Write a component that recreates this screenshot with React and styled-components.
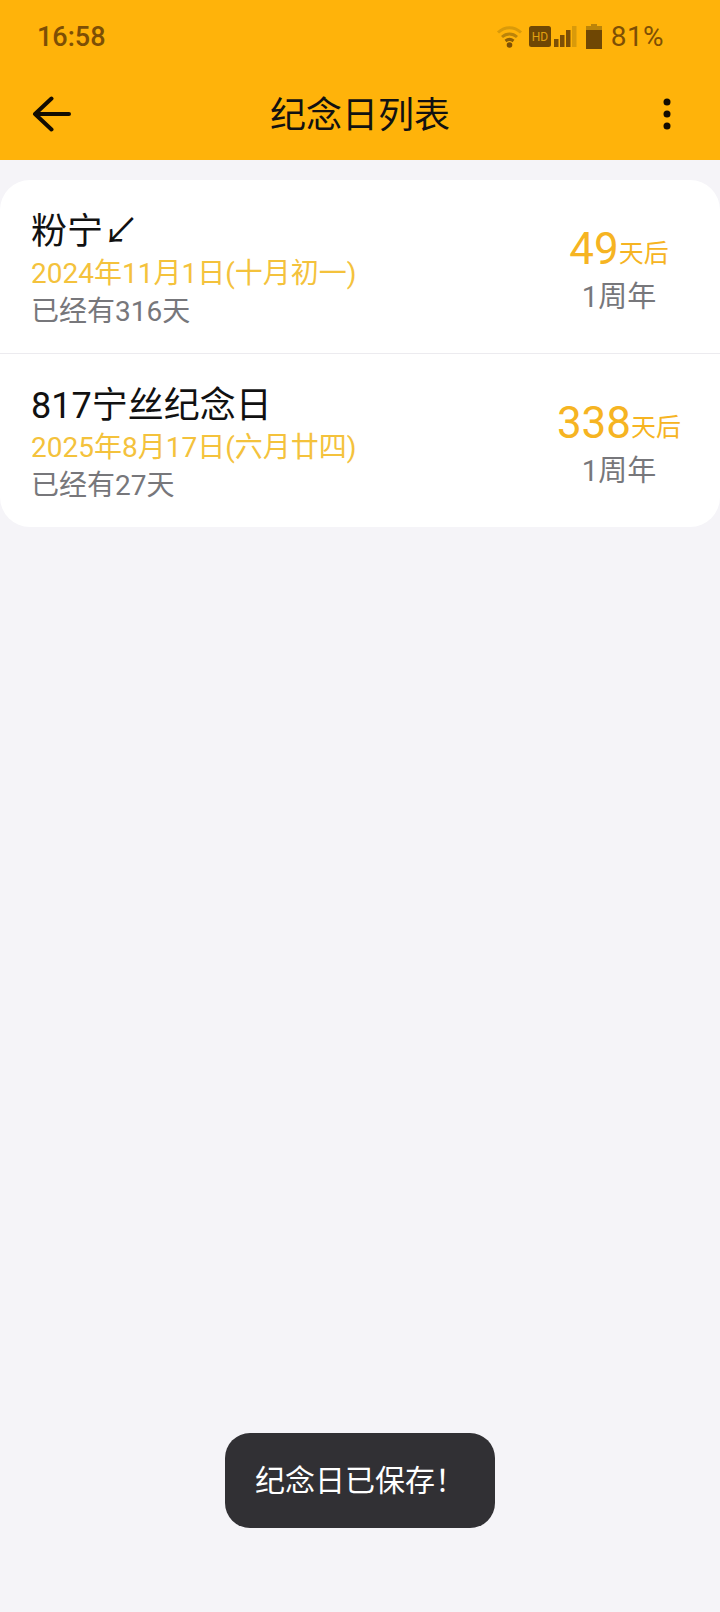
import styled, { createGlobalStyle } from "styled-components";

const GlobalStyle = createGlobalStyle`
  html, body {
    margin: 0;
    padding: 0;
    background: #f5f4f8;
  }
  * {
    box-sizing: border-box;
  }
`;

const AMBER = "#ffb30a";
const STATUS = "#7d4f05";

const anniversaries = [
  {
    name: "粉宁↙",
    date: "2024年11月1日(十月初一)",
    passed: "已经有316天",
    left: "49",
    years: "1周年",
  },
  {
    name: "817宁丝纪念日",
    date: "2025年8月17日(六月廿四)",
    passed: "已经有27天",
    left: "338",
    years: "1周年",
  },
];

const Page = styled.div`
  position: relative;
  width: 720px;
  height: 1612px;
  overflow: hidden;
  background: #f5f4f8;
  font-family: Roboto, "Noto Sans CJK SC", sans-serif;
`;

const Header = styled.header`
  height: 160px;
  background: ${AMBER};
`;

const StatusBar = styled.div`
  display: flex;
  align-items: center;
  justify-content: space-between;
  height: 72px;
  padding: 0 56px 0 37px;
  color: ${STATUS};
  font-size: 28px;
`;

const Clock = styled.span`
  margin-top: 2px;
  font-size: 27px;
  font-weight: 500;
`;

const StatusIcons = styled.div`
  display: flex;
  align-items: center;
`;

const Battery = styled.span`
  margin-left: 9px;
  letter-spacing: 0.4px;
`;

const Toolbar = styled.div`
  display: grid;
  grid-template-columns: 1fr auto 1fr;
  align-items: center;
  height: 88px;
  padding: 0 31px 4px;
`;

const ToolbarEnd = styled.div`
  display: flex;
  justify-content: ${(props) => (props.$right ? "flex-end" : "flex-start")};
  padding-right: ${(props) => (props.$right ? "18px" : "0")};
`;

const Title = styled.h1`
  margin: 4px 0 0;
  font-size: 36px;
  font-weight: 400;
  line-height: 48px;
  color: #111;
`;

const Card = styled.section`
  margin-top: 20px;
  background: #fff;
  border-radius: 30px;
`;

const Row = styled.div`
  display: flex;
  align-items: center;
  justify-content: space-between;
  height: 173px;
  padding: 0 21px 0 31px;
  & + & {
    height: 174px;
    border-top: 1px solid #ecebef;
  }
`;

const Info = styled.div`
  display: flex;
  flex-direction: column;
  padding-top: 3px;
`;

const Name = styled.div`
  padding-top: 2px;
  font-size: 36px;
  line-height: 46px;
  color: #111;
`;

const DateText = styled.div`
  font-size: 28px;
  line-height: 38px;
  color: #f4c23c;
`;

const Passed = styled.div`
  margin-top: 1px;
  font-size: 28px;
  line-height: 36px;
  color: #77777b;
`;

const Countdown = styled.div`
  display: flex;
  flex-direction: column;
  align-items: center;
  width: 160px;
  padding-top: 6px;
`;

const Days = styled.div`
  height: 52px;
  color: #f6b422;
  font-size: 44px;
  line-height: 52px;
  white-space: nowrap;
`;

const DaysUnit = styled.span`
  font-size: 25px;
  vertical-align: 2px;
`;

const Years = styled.div`
  margin-top: 2px;
  font-size: 29px;
  line-height: 40px;
  color: #77777b;
`;

const Toast = styled.div`
  position: absolute;
  left: 225px;
  top: 1433px;
  width: 270px;
  height: 95px;
  padding: 0 0 6px 30px;
  display: flex;
  align-items: center;
  background: #313034;
  border-radius: 25px;
  color: #fff;
  font-size: 30px;
`;

const WifiIcon = () => (
  <svg width="27" height="24" viewBox="0 0 27 24" fill="none">
    <path d="M2 8.500C9 2 18 2 25 8.500" stroke="#d99a0a" strokeWidth="3" />
    <path d="M6 13C10.500 9 16.500 9 21 13" stroke="#bb840a" strokeWidth="3" />
    <path d="M9.500 17C12 15 15 15 17.500 17" stroke="#8f5f06" strokeWidth="3" />
    <circle cx="13.500" cy="21" r="2.800" fill={STATUS} />
  </svg>
);

const HdIcon = () => (
  <svg width="22" height="21" viewBox="0 0 22 21" style={{ marginLeft: 6 }}>
    <rect width="22" height="21" rx="2.500" fill="#6f4704" />
    <text x="11" y="15" textAnchor="middle" fontFamily="Roboto" fontSize="12" fill="#e0a010">
      HD
    </text>
  </svg>
);

const SignalIcon = () => (
  <svg width="23" height="21" viewBox="0 0 23 21" style={{ marginLeft: 3 }}>
    <rect x="0" y="13" width="4.500" height="8" fill={STATUS} />
    <rect x="6" y="9" width="4.500" height="12" fill={STATUS} />
    <rect x="12" y="4" width="4.500" height="17" fill={STATUS} />
    <rect x="18" y="0" width="4.500" height="21" fill="#d99a0a" />
  </svg>
);

const BatteryIcon = () => (
  <svg width="16" height="25" viewBox="0 0 16 25" style={{ marginLeft: 9 }}>
    <path d="M5 0h6v2h5v5H0V2h5z" fill="#bb840a" />
    <rect x="0" y="6" width="16" height="19" fill="#6f4704" />
  </svg>
);

const BackIcon = () => (
  <svg width="40" height="36" viewBox="0 0 40 36" fill="none">
    <path
      d="M38 18H4M20.500 2.500L4 18L20.500 33.500"
      stroke="#120c02"
      strokeWidth="4"
      strokeLinecap="round"
      strokeLinejoin="round"
    />
  </svg>
);

const MoreIcon = () => (
  <svg width="8" height="32" viewBox="0 0 8 32">
    <circle cx="4" cy="4" r="3.500" fill="#120c02" />
    <circle cx="4" cy="16" r="3.500" fill="#120c02" />
    <circle cx="4" cy="28" r="3.500" fill="#120c02" />
  </svg>
);

export default function App() {
  return (
    <Page>
      <GlobalStyle />
      <Header>
        <StatusBar>
          <Clock>16:58</Clock>
          <StatusIcons>
            <WifiIcon />
            <HdIcon />
            <SignalIcon />
            <BatteryIcon />
            <Battery>81%</Battery>
          </StatusIcons>
        </StatusBar>
        <Toolbar>
          <ToolbarEnd>
            <BackIcon />
          </ToolbarEnd>
          <Title>纪念日列表</Title>
          <ToolbarEnd $right>
            <MoreIcon />
          </ToolbarEnd>
        </Toolbar>
      </Header>
      <Card>
        {anniversaries.map((item) => (
          <Row key={item.name}>
            <Info>
              <Name>{item.name}</Name>
              <DateText>{item.date}</DateText>
              <Passed>{item.passed}</Passed>
            </Info>
            <Countdown>
              <Days>
                {item.left}
                <DaysUnit>天后</DaysUnit>
              </Days>
              <Years>{item.years}</Years>
            </Countdown>
          </Row>
        ))}
      </Card>
      <Toast>纪念日已保存！</Toast>
    </Page>
  );
}
